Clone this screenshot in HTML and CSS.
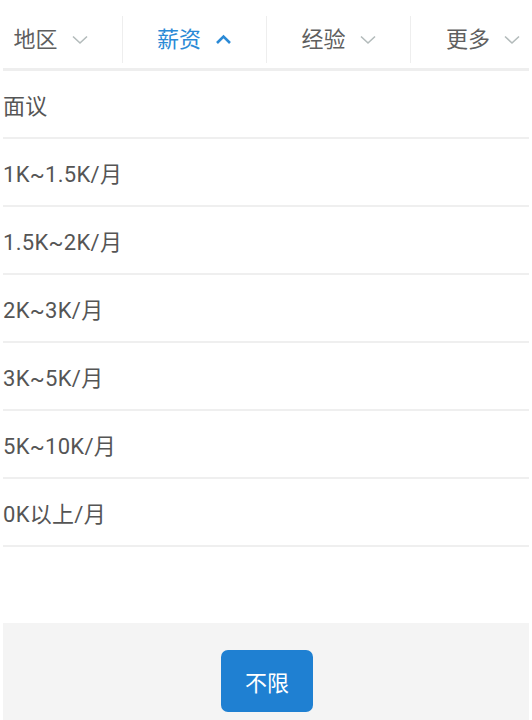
FILE: index.html
```html
<!DOCTYPE html>
<html lang="zh-CN">
<head>
<meta charset="utf-8">
<title>薪资筛选</title>
<link rel="stylesheet" href="styles.css">
</head>
<body>
<div class="page">
  <div class="tabs">
    <div class="tab">
      <span class="tab-label">地区</span>
      <svg class="chev" width="16" height="10" viewBox="0 0 16 10"><path d="M1 1.5 L8 8 L15 1.5" fill="none" stroke="#b3bbbb" stroke-width="1.6"/></svg>
    </div>
    <div class="tab tab-active">
      <span class="tab-label">薪资</span>
      <svg class="chev" width="17" height="11" viewBox="0 0 17 11"><path d="M2 9 L8.5 2.5 L15 9" fill="none" stroke="#2b8ad6" stroke-width="2.6"/></svg>
    </div>
    <div class="tab">
      <span class="tab-label">经验</span>
      <svg class="chev" width="16" height="10" viewBox="0 0 16 10"><path d="M1 1.5 L8 8 L15 1.5" fill="none" stroke="#b3bbbb" stroke-width="1.6"/></svg>
    </div>
    <div class="tab tab-last">
      <span class="tab-label">更多</span>
      <svg class="chev" width="16" height="10" viewBox="0 0 16 10"><path d="M1 1.5 L8 8 L15 1.5" fill="none" stroke="#b3bbbb" stroke-width="1.6"/></svg>
    </div>
  </div>
  <div class="panel">
    <ul class="options">
      <li class="option">面议</li>
      <li class="option">1K~1.5K/月</li>
      <li class="option">1.5K~2K/月</li>
      <li class="option">2K~3K/月</li>
      <li class="option">3K~5K/月</li>
      <li class="option">5K~10K/月</li>
      <li class="option">0K以上/月</li>
    </ul>
    <div class="footer">
      <button class="reset">不限</button>
    </div>
  </div>
</div>
</body>
</html>
```

FILE: styles.css
```css
* { box-sizing: border-box; }
html, body {
  margin: 0;
  padding: 0;
  background: #ffffff;
  overflow: hidden;
}
body {
  font-family: "Roboto", "Noto Sans CJK SC", sans-serif;
  width: 532px;
  height: 720px;
}
.page {
  width: 576px;
  margin-left: -21px;
  height: 720px;
  display: flex;
  flex-direction: column;
}
.tabs {
  display: flex;
  height: 68px;
  flex: 0 0 68px;
}
.tab {
  flex: 0 0 144px;
  margin: 16px 0 5px;
  border-right: 1px solid #eeeeee;
  display: flex;
  align-items: center;
  justify-content: center;
  gap: 14px;
  color: #5f5f5f;
  font-size: 22px;
}
.tab-last { border-right: none; }
.tab-active { color: #2b8ad6; }
.tab-label { line-height: 1; }
.chev { display: block; }
.panel {
  flex: 1;
  margin: 0 26px 0 24px;
  border-top: 3px solid #eeeeee;
  display: flex;
  flex-direction: column;
}
.options {
  list-style: none;
  margin: 0;
  padding: 0;
  flex: 1;
}
.option {
  height: 68px;
  border-bottom: 2px solid #efefef;
  display: flex;
  align-items: center;
  font-size: 22px;
  letter-spacing: 0.3px;
  color: #555555;
}
.footer {
  height: 97px;
  background: #f4f4f4;
  display: flex;
  justify-content: center;
  align-items: flex-start;
  padding-top: 27px;
}
.reset {
  width: 92px;
  height: 62px;
  border: none;
  border-radius: 7px;
  background: #1f80d2;
  color: #ffffff;
  font-family: "Roboto", "Noto Sans CJK SC", sans-serif;
  font-size: 22px;
  margin-left: 2px;
}
```
